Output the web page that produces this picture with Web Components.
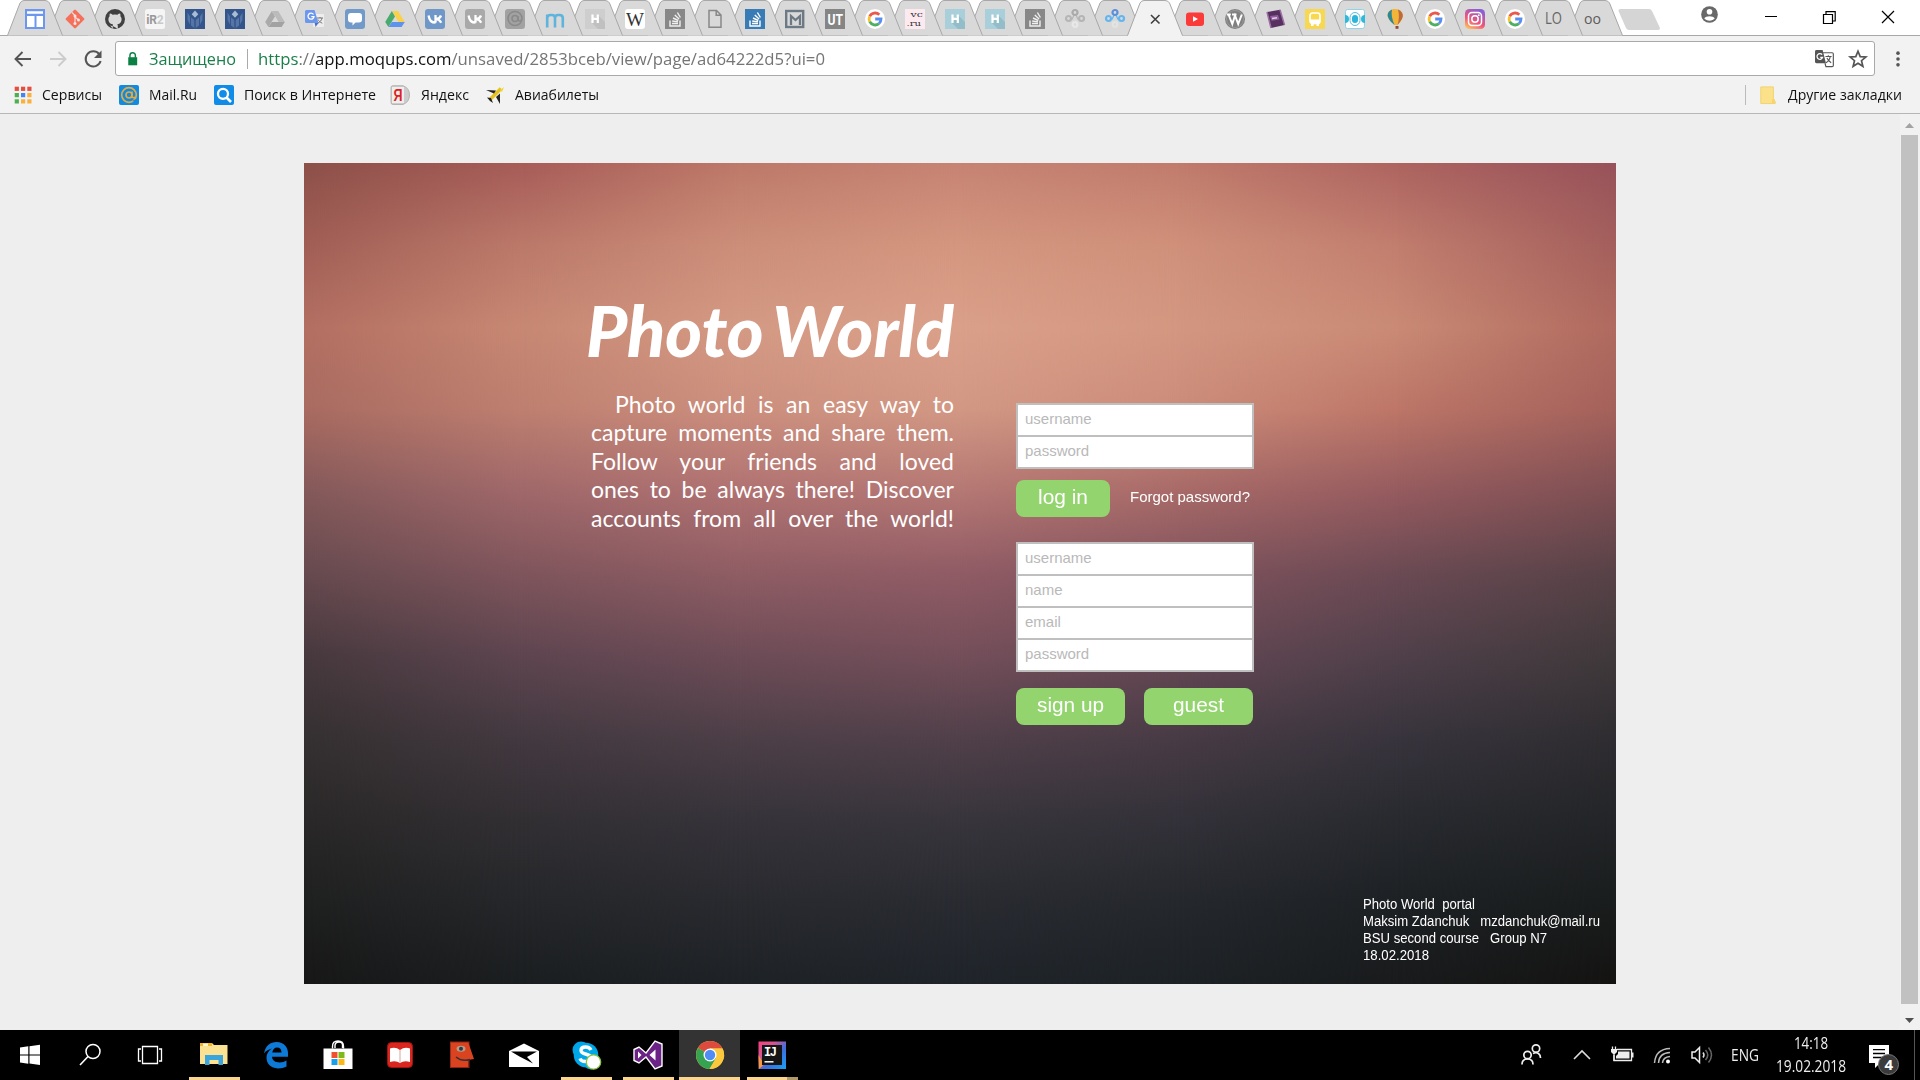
<!DOCTYPE html>
<html lang="ru">
<head>
<meta charset="utf-8">
<title>Photo World</title>
<style>
html,body{margin:0;padding:0;height:100%;overflow:hidden;background:#eee}
body{font-family:"Open Sans","Noto Sans",sans-serif}
</style>
</head>
<body>
<desktop-screen></desktop-screen>
<script>
const so = (bg, fg) => `<rect width="20" height="20" fill="${bg}"/><path d="M5 11.500v5.500h10v-5.500M7 14.500h6M7.200 12l5.800.9M8 9l5.300 2.500M9.800 6l4.300 4M12.400 3.500l3 5" fill="none" stroke="${fg}" stroke-width="1.400"/>`;
const drive = (a, b, c) => `<path d="M7 2h6.200l6.600 11h-6.200z" fill="${b}"/><path d="M6.800 2 10 7.400 3.400 18 .2 13z" fill="${a}"/><path d="M6.800 13h13l-3.200 5H3.500z" fill="${c}"/>`;
const google = `<circle cx="10" cy="10" r="10" fill="#fff"/><g fill="none" stroke-width="2.800"><path d="M14.300 5.800A6 6 0 0 0 4.700 7.300" stroke="#ea5a4c"/><path d="M4.700 7.300a6 6 0 0 0 0 5.400" stroke="#fbc02d"/><path d="M4.700 12.700a6 6 0 0 0 9.300 1.800" stroke="#4caf62"/><path d="M14 14.500A6 6 0 0 0 16 10H10.200" stroke="#5a8df0"/></g>`;
const vk = bg => `<rect width="20" height="20" rx="3" fill="${bg}"/><path d="M3.600 6.500c.6 4.500 3.200 7.200 6.900 7.200M10.500 6v7.700M16 6.500c-.7 2-2.300 3.400-4.800 3.600 2.300.2 3.900 1.500 5 3.600" fill="none" stroke="#fff" stroke-width="2.300"/>`;
const hh = (bg, sh) => `<rect width="20" height="20" fill="${bg}"/><path d="M13 6l7 7v7h-7l-6-6z" fill="${sh}"/><path d="M7.500 5.500v8.500M12.800 5.500v8.500M7.500 9.800h5.300" stroke="#fff" stroke-width="2.200" fill="none"/>`;
const nodes = (a, b, c) => `<g fill="none" stroke-width="2.200"><path d="M7 10.500 9 6M11 6l2 4.500" stroke="${b}" stroke-width="1.200"/><circle cx="10" cy="3.500" r="2.500" stroke="${a}"/><circle cx="3.500" cy="9.500" r="2.500" stroke="${b}"/><circle cx="16.500" cy="9.500" r="2.500" stroke="${b}"/><circle cx="10" cy="15.500" r="2.300" stroke="${c}"/></g>`;
const shield = `<rect width="20" height="20" fill="#34558b"/><path d="M2.500 3.500 5 7.500v8L2.500 11zM17.500 3.500 15 7.500v8l2.500-4.500zM6 8.500l4 3 4-3v8l-4 3-4-3z" fill="#5475a5"/><path d="M10 1.500l3.300 3.700L10 8.800 6.700 5.200z" fill="#a9bcd6"/><path d="M10 11v8" stroke="#27477c"/>`;
const ICONS = {
 layout:`<rect width="20" height="20" fill="#6d97ee"/><path d="M2 2.200h16v2.600H2zM2 7h7.500v11H2zM11.500 7H18v11h-6.500z" fill="#fff"/>`,
 git:`<rect x="3" y="3" width="14" height="14" rx="1.200" transform="rotate(45 10 10)" fill="#f5705a"/><path d="M7 3.500l3 3v8M10 8l3.500 3" stroke="#f6d9d3" stroke-width="1.200" fill="none"/><circle cx="10" cy="7" r="1.500" fill="#f6e5e1"/><circle cx="10" cy="14.500" r="1.500" fill="#f6e5e1"/><circle cx="13.500" cy="11" r="1.500" fill="#f6e5e1"/>`,
 github:`<circle cx="10" cy="10" r="10" fill="#404040"/><path d="M7.700 19.700v-3c-2.400.5-3-1-3.500-1.700M7.700 17v-1.800c-3.200-.4-4.300-2.300-4.300-5 0-1.200.5-2.200 1.200-3-.2-.9-.1-1.900.3-2.700.9 0 1.800.5 2.700 1.200a9.500 9.500 0 0 1 4.800 0c.9-.7 1.800-1.200 2.700-1.200.4.8.5 1.800.3 2.700.7.800 1.200 1.800 1.200 3 0 2.700-1.100 4.600-4.300 5 .4.500.5 1.200.5 1.900v2.600z" fill="#dadada"/><path d="M7.800 16.200c-2 .4-2.700-.6-3.600-1.800" stroke="#404040" fill="none"/>`,
 ir2:`<rect width="20" height="20" rx="2.500" fill="#f5f5f5"/><text x="1.200" y="14.500" font-size="12" font-weight="700" font-family="Roboto" fill="#999" textLength="17.500">iR<tspan fill="#c8c8c8">2</tspan></text>`,
 shield, driveg:drive('#aaa','#bbb','#a2a2a2'), drive:drive('#48aa6b','#fad14b','#5e93ed'),
 translate:`<rect x="8" y="5" width="11" height="13" rx="1" fill="#eee"/><path d="M1.500 1h8l4 13H1.500A1.500 1.500 0 0 1 0 12.500v-10A1.500 1.500 0 0 1 1.500 1z" fill="#6c97ed"/><path d="M9.700 14h3.800l-3 4z" fill="#4a6fc6"/><path d="M8.500 5.500A3 3 0 1 0 9 7.600H6.300" stroke="#fff" stroke-width="1.300" fill="none"/><path d="M12 9h6M15 8v1M17 9c-.4 2.500-2 4-4 5M13 10.500c.8 1.500 2 2.800 4.300 3.700" stroke="#777" fill="none"/>`,
 chat:`<rect width="20" height="20" rx="3" fill="#729ac9"/><path d="M6 4h8q3 0 3 3v3.500q0 3-3 3h-3.500l-3 3v-3H6q-3 0-3-3V7q0-3 3-3z" fill="#fff"/>`,
 vk:vk('#6f98c9'), vkg:vk('#a9a9a9'),
 atg:`<rect width="20" height="20" rx="3" fill="#a2a2a2"/><circle cx="10" cy="9.500" r="7" fill="none" stroke="#8a8a8a" stroke-width="1.600"/><circle cx="10" cy="9.500" r="3" fill="none" stroke="#8a8a8a" stroke-width="1.600"/><path d="M13 7v4q1 2 3 0" stroke="#8a8a8a" fill="none" stroke-width="1.500"/>`,
 m:`<path d="M2.200 18.500V5.500M2.200 9q0-3 3.300-3H7q3 0 3 3v9.500M10 9q0-3 3-3h1.500q3.300 0 3.300 3v9.500" fill="none" stroke="#5eb4dc" stroke-width="2.600"/>`,
 hg:hh('#cecece','#c0c0c0'), h:hh('#a9d0da','#93bdc8'),
 wiki:`<rect width="20" height="20" rx="3" fill="#fff"/><text x="1" y="16.500" font-size="18" font-family="Liberation Serif" fill="#333" textLength="18" lengthAdjust="spacingAndGlyphs">W</text>`,
 sog:so('#888','#f0f0f0'), so:so('#397cb5','#fff'),
 doc:`<path d="M4 1.500h7.500L16 6v12.300H4zM11.200 1.500v4.800H16" fill="none" stroke="#888" stroke-width="1.500"/>`,
 mm:`<rect x="1.200" y="2" width="17" height="16" fill="none" stroke="#6d7984" stroke-width="2.400"/><path d="M6 16V7l4.500 4L15 7v9" fill="none" stroke="#6d7984" stroke-width="2.300"/>`,
 ut:`<rect width="20" height="20" fill="#858585"/><text x="2.500" y="15.500" font-size="15" font-weight="700" font-family="Roboto" fill="#fff" textLength="15.500" lengthAdjust="spacingAndGlyphs">UT</text>`,
 google,
 vc:`<rect width="20" height="20" fill="#fdeaf0"/><g font-size="7.500" font-family="DejaVu Serif" fill="#333" transform="scale(1.450 1)"><text x="3.800" y="8" textLength="8.500" lengthAdjust="spacingAndGlyphs">vc</text><text x="1" y="17" textLength="10" lengthAdjust="spacingAndGlyphs">.ru</text></g>`,
 ng:nodes('#aaa','#b5b5b5','#e8e8e8'), nb:nodes('#5a8fdc','#62b5ef','#e2e4e0'),
 close:`<path d="M6 6l8.500 8.500M14.500 6 6 14.500" stroke="#404040" stroke-width="1.600"/>`,
 yt:`<rect x="1" y="3.500" width="18" height="13.500" rx="3" fill="#fb3a3a"/><path d="M8 7.200v5.600l5-2.800z" fill="#fff"/>`,
 wp:`<circle cx="10" cy="10" r="10" fill="#808080"/><circle cx="10" cy="10" r="8.500" fill="none" stroke="#999"/><path d="M1.800 5.500h4M7 5.500h4.500M3.500 5.500l3.800 9.500 2.700-8.500 3.200 8.500 3.600-9.500" stroke="#fff" stroke-width="2" fill="none"/>`,
 purple:`<path d="M2 3 15 .800 19.500 16 6 19z" fill="#573060"/><path d="M2 3l4 16M15 .8 19.500 16" stroke="#9b6fa4" stroke-width="1.500"/><path d="M5 7l8-1 1.500 4.500-8 1.300z" fill="#90609c"/><path d="M7 9.500l5-.7" stroke="#e3cfe6" stroke-width="1.500"/>`,
 bus:`<rect width="20" height="20" fill="#f9d851"/><rect x="5" y="4" width="10" height="10.500" rx="2.500" fill="none" stroke="#fff" stroke-width="1.700"/><path d="M5 10.500h10v3.500H5zM6 14h2.500v3H6zM11.500 14H14v3h-2.500z" fill="#fff"/>`,
 doll:`<rect x=".5" y=".5" width="19" height="19" rx="2" fill="#fff" stroke="#8fd3e6"/><path d="M0 6q4 0 4 4t-4 4zM20 6q-4 0-4 4t4 4z" fill="#2fb7dc"/><rect x="5" y="3.500" width="10" height="13" rx="5" fill="#fff" stroke="#57bfd9"/><rect x="7" y="6" width="6" height="8" rx="3" fill="#2db4da"/>`,
 balloon:`<path d="M10 0c5 0 8 3 8 6.500 0 4-4 8-5.500 9.500h-3C6 13 2.500 9.500 2.500 6 2.500 2.500 6 0 10 0z" fill="#f3b43a"/><path d="M7 .5C3.500 2 2 5 3 8c1 3 4 6 6.500 8C7 10 6 5 7 .5z" fill="#2c8796"/><path d="M13 .5c3.500 1.500 5 4 4.800 6.500-.5 3.500-4 7.500-5.300 9 1.500-5 2-10 .5-15.500z" fill="#bd6a3c"/><path d="M10.500 17h3v2.800h-3z" fill="#8a4a3a"/>`,
 insta:`<defs><linearGradient id="ig" x1=".2" y1="1" x2=".7" y2="0"><stop offset="0" stop-color="#fcc060"/><stop offset=".4" stop-color="#f0557a"/><stop offset="1" stop-color="#8560d8"/></linearGradient></defs><rect width="20" height="20" rx="4.500" fill="url(#ig)"/><g fill="none" stroke="#fff" stroke-width="1.500"><rect x="3.500" y="3.500" width="13" height="13" rx="3.500"/><circle cx="10" cy="10" r="3.200"/></g><circle cx="13.800" cy="6.200" r=".9" fill="#fff"/>`,
 lo:`<text x="0" y="15" font-size="15.500" font-family="Open Sans" font-weight="400" fill="#666" textLength="17" lengthAdjust="spacingAndGlyphs">LO</text>`,
 oo:`<text x="-1" y="15" font-size="15" font-family="Open Sans" fill="#5c5c5c" textLength="17" lengthAdjust="spacingAndGlyphs">oo</text>`,
 back:`<path d="M18 10H3M9.500 3 2.500 10l7 7" fill="none" stroke="#555" stroke-width="1.900"/>`,
 fwd:`<path d="M2 10h15M10.500 3l7 7-7 7" fill="none" stroke="#ccc" stroke-width="1.900"/>`,
 reload:`<path d="M16.200 5.200A7.600 7.600 0 1 0 17.600 12" fill="none" stroke="#555" stroke-width="2"/><path d="M18.500 1.500V9H11z" fill="#555"/>`,
 lock:`<path d="M5 8.500h10.500v9.500H5z" fill="#0b8043"/><path d="M7 9V6.500a3.200 3.200 0 0 1 6.400 0V9" fill="none" stroke="#0b8043" stroke-width="1.700"/>`,
 apps:['#e74c3c,#e74c3c,#e74c3c','#4caf50,#4285f4,#fbb03b','#4caf50,#fbb03b,#fbb03b'].map((r,j)=>r.split(',').map((c,i)=>`<rect x="${1.7+i*6.300}" y="${1.7+j*6.300}" width="4.200" height="4.200" fill="${c}"/>`).join('')).join(''),
 mailru:`<rect width="20" height="20" rx="2" fill="#118be0"/><circle cx="10" cy="10" r="7.300" fill="none" stroke="#e9a93b" stroke-width="1.700"/><circle cx="10" cy="10" r="3" fill="none" stroke="#e9a93b" stroke-width="1.700"/><path d="M13 6.500v4.700q.8 2.500 3.500.8" fill="none" stroke="#e9a93b" stroke-width="1.600"/><path d="M13 16l4 1v-3z" fill="#118be0"/>`,
 search:`<rect width="20" height="20" rx="2" fill="#118be8"/><circle cx="9" cy="8.800" r="5" fill="none" stroke="#fff" stroke-width="2.300"/><path d="M12.500 12.500 17 17" stroke="#fff" stroke-width="2.600"/>`,
 yandex:`<path d="M3 .7h10Q19.500 3 19.500 10T13 19.500H3q-2 0-2-2v-15Q1 .7 3 .7z" fill="#ccc" stroke="#aaa" stroke-width=".8"/><rect x="2" y="2" width="12" height="16" fill="#eee"/><text x="3.500" y="16" font-size="16" font-weight="700" font-family="Liberation Sans" fill="#e0201c" textLength="9" lengthAdjust="spacingAndGlyphs">Я</text>`,
 plane:`<path d="M5 14.500 16 3.500" stroke="#e5c21c" stroke-width="3.500"/><path d="M15 5 19 2l-2 5z" fill="#f2d53a"/><path d="M1 5l10 .5L9 8.500zM15 8.500V19l-4-7zM2 12.500l4 .5 2 5-3-2z" fill="#222"/>`,
 folder:`<path d="M2 1h14v13.500l2 3v2H2z" fill="#fbe28a" stroke="#f1d069"/><path d="M14.500 19.500v-4.700h3v4.700z" fill="#f7d566"/>`,
 gtr:`<path d="M1.500 1H8l3.500 14h-10Q0 15 0 13.500v-11Q0 1 1.500 1z" fill="#555"/><path d="M8.500 4H18q1.300 0 1.300 1.300v12q0 1.200-1.300 1.200h-6.500l-1-3.500" fill="none" stroke="#555" stroke-width="1.200"/><path d="M7.500 6A3 3 0 1 0 8 8.700H5.500" fill="none" stroke="#fff" stroke-width="1.300"/><path d="M11 8h6.500M14 6.500V8M16 8c-.4 3-2 5-4.500 6.500M12.500 9.500c1 2 2.500 3.500 4.500 5" fill="none" stroke="#555" stroke-width="1.100"/>`,
 star:`<path d="M10 2.200l2.200 5.400 5.700.4-4.400 3.700 1.400 5.600L10 14.200l-4.900 3.100 1.400-5.600L2.100 8l5.700-.4z" fill="none" stroke="#555" stroke-width="1.700"/>`,
 dots:`<g fill="#555"><circle cx="10" cy="3.500" r="2"/><circle cx="10" cy="10" r="2"/><circle cx="10" cy="16.500" r="2"/></g>`,
 user:`<circle cx="10" cy="10" r="9.800" fill="#686868"/><circle cx="10" cy="6.700" r="3.300" fill="#fff"/><path d="M3.800 14.500c2-3.300 10.400-3.300 12.400 0-2.500 3.700-9.900 3.700-12.400 0z" fill="#fff"/>`,
 min:`<path d="M4 9.500h12" stroke="#000" stroke-width="1"/>`,
 max:`<path d="M4.500 7.500h9v9h-9zM7 7V4.700h9.200V14H14" fill="none" stroke="#000" stroke-width="1.200"/>`,
 x:`<path d="M4 4l12 12M16 4l-12 12" stroke="#000" stroke-width="1.200"/>`,
 /* taskbar, drawn on a 32 unit box */
 win:`<path d="M6 8.500l8.300-1.200v8.100H6zM15.500 7.200 26 5.800v9.600H15.500zM6 16.600h8.300v8.100L6 23.600zM15.500 16.600H26V26l-10.500-1.400z" fill="#fff"/>`,
 find:`<circle cx="18" cy="12.500" r="7" fill="none" stroke="#fff" stroke-width="1.500"/><path d="M13 17.500 5 26" stroke="#fff" stroke-width="1.600"/>`,
 tview:`<path d="M8.500 7.500h15v17h-15zM7 10H4.500v12H7M25 10h2.500v12H25" fill="none" stroke="#fff" stroke-width="1.300"/>`,
 explorer:`<path d="M2 4h12l2 2h13.500v19H2z" fill="#fbe293"/><path d="M2 4h12v3H2z" fill="#f0b52e"/><path d="M5 4.500h5V7H5z" fill="#fff4c4"/><path d="M7 26V16h18v10h-4.500v-5h-9v5z" fill="#3aa5dd"/>`,
 edge:`<path d="M4 14.500C5.500 6.500 10.500 3 16.500 3 24 3 28 8.500 28 14v3.800H12c.3 4 3.500 5.700 7.500 5.700 3 0 5-.8 7-2v6c-2.500 1.300-5 1.900-8.500 1.900C11 29.400 6.500 25 6.500 18.600c0-4 2-7 5.500-9.200C9 10 6 11.500 4 14.500zM12.300 13.500h9.200c0-3.300-1.600-5-4.400-5s-4.300 2-4.800 5z" fill="#0e7ad8"/>`,
 store:`<path d="M10.500 9.500V7.500q0-5.500 5.500-5.500t5.500 5.500v2M13 9V6q.5-3 4-3t3.500 3v3" fill="none" stroke="#fff" stroke-width="1.400"/><path d="M1.500 9.500h29V30h-29z" fill="#fff"/><path d="M9.500 13h6v6h-6z" fill="#f0502d"/><path d="M16.500 13h6v6h-6z" fill="#7fba1c"/><path d="M9.500 20h6v6h-6z" fill="#18a0ea"/><path d="M16.500 20h6v6h-6z" fill="#fbb713"/>`,
 book:`<rect x="3.500" y="3.500" width="25" height="25" rx="4" fill="#d9261f" stroke="#9c1512"/><path d="M6 9.500q5.500-2 10 1.500 4.500-3.500 10-1.500V23q-6-1.800-10 1-4-2.800-10-1z" fill="#fff"/><path d="M16 11v12.500" stroke="#d5a5a0"/>`,
 face:`<path d="M4 2.500h19.500V29H4z" fill="#8c2517"/><path d="M4.800 3.500h17.500L28 20l-6 1v7H4.800z" fill="#d9431f"/><ellipse cx="15" cy="9.800" rx="4.500" ry="3" fill="#ba9b80"/><circle cx="15" cy="9.800" r="2" fill="#243f55"/><path d="M10 18q6 5 14 2.500" fill="none" stroke="#333" stroke-width="1.500"/>`,
 mail:`<path d="M1 12 16 4.500 31 12v16H1z" fill="#fff"/><path d="M3 12.500h26L19 18l6 6.500-13.500-7z" fill="#000"/>`,
 skype:`<circle cx="11" cy="11" r="8.500" fill="#00a5e8"/><circle cx="21" cy="22" r="8.500" fill="#00a5e8"/><circle cx="16" cy="16" r="12.300" fill="#00a8ea"/><path d="M21 11q-1.500-3-5.500-3-4.500 0-4.500 3.500c0 4.500 10 3 10 7 0 3-2 4-5.500 4q-4.500 0-5.500-3" fill="none" stroke="#fff" stroke-width="3.400"/><circle cx="23.500" cy="23" r="7.200" fill="#fff" stroke="#8cc63f" stroke-width="1.300"/>`,
 vs:`<path d="M2 10.500 7 8l7 6L23 2l7 3v22l-7 3-9-12-7 6-5-2.500z" fill="#6b2485" stroke="#fff" stroke-width="1.400"/><path d="M6 12.500v7l3.500-3.500zM23.500 10.500v11L17.500 16z" fill="#fff"/>`,
 chrome:`<circle cx="16" cy="16" r="14" fill="#fbc93d"/><path d="M16 16 3.900 9A14 14 0 0 1 28.500 9.500H16z" fill="#dd4b3e"/><path d="M16 16 3.900 9A14 14 0 0 0 15.500 30L22 19.500z" fill="#35a352"/><path d="M16 9.500h12.500A14 14 0 0 1 15.500 30L22 19z" fill="#fbc93d"/><circle cx="16" cy="16" r="6.500" fill="#fff"/><circle cx="16" cy="16" r="5.200" fill="#4f8df5"/>`,
 ij:`<defs><linearGradient id="ijg" x1="0" y1="0" x2="1" y2="1"><stop offset="0" stop-color="#f4407f"/><stop offset=".3" stop-color="#d9558f"/><stop offset=".6" stop-color="#3b6fe0"/><stop offset="1" stop-color="#1ba0f5"/></linearGradient></defs><rect x="2.500" y="2.500" width="27.500" height="27.500" fill="url(#ijg)"/><path d="M2.500 16 8 25.500 3 30z" fill="#f59a3c"/><rect x="6" y="6" width="20" height="20" fill="#151515"/><text x="8" y="17" font-size="12" font-weight="700" font-family="Liberation Mono" fill="#fff" textLength="13">IJ</text><path d="M8.500 22.800h9" stroke="#fff" stroke-width="1.500"/>`,
 people:`<g fill="none" stroke="#eee" stroke-width="1.700"><circle cx="20" cy="9.500" r="3.700"/><circle cx="11.500" cy="16" r="3.700"/><path d="M6 25.500q0-5.500 5.500-5.500t5.500 5.500M17 14.500q3-1.500 5.500 0 2 1.500 2 4.500"/></g>`,
 caret:`<path d="M8 20l8-8 8 8" fill="none" stroke="#ddd" stroke-width="1.600"/>`,
 battery:`<path d="M12 10.500h14.500v11H9V16" fill="none" stroke="#eee" stroke-width="1.300"/><path d="M13 12.500h11.500v7H11V17l2-2zM27 13.500h1.500v5H27zM6 10h6v3L10 15H8l-2-2z" fill="#eee"/><path d="M7.500 10V7.500M10.500 10V7.500M9 15v7" stroke="#eee" stroke-width="1.300"/>`,
 wifi:`<g fill="none" stroke-width="1.500" stroke="#bbb"><path d="M8.500 24Q9.500 10 24 9.500"/><path d="M12.500 24Q13 14 24 13.500"/><path d="M16.500 24Q17 18 24 17.500"/></g><circle cx="22" cy="22.500" r="2" fill="#fff"/>`,
 sound:`<path d="M7 13h3l4.500-4.500v15L10 19H7z" fill="none" stroke="#eee" stroke-width="1.500"/><path d="M18 13.500q2 2.500 0 5" stroke="#ddd" fill="none" stroke-width="1.500"/><path d="M20.500 11q4.500 5 0 10M23.500 8.500q6 7.500 0 15" stroke="#666" fill="none" stroke-width="1.500"/>`,
 note:`<path d="M1 6h20v18h-9l-5 5v-5H1z" fill="#fff"/><path d="M5 10.700h12M5 14.500h12M5 18.500h12" stroke="#000" stroke-width="1.300"/><circle cx="20.500" cy="25.500" r="10" fill="#3b3b3b" stroke="#777"/><text x="16.500" y="31" font-size="15" font-weight="700" font-family="Open Sans" fill="#fff">4</text>`
};
const make = (tag, html, init) => customElements.define(tag, class extends HTMLElement {
  connectedCallback() {
    if (this.shadowRoot) return;
    this.attachShadow({mode: 'open'}).innerHTML = typeof html === 'function' ? html(this) : html;
    if (init) init(this, this.shadowRoot);
  }
});

/* line of text drawn at an exact width: <fit-text w="120"> */
make('fit-text', el => `<style>:host{display:block;flex:none;white-space:pre;width:${el.getAttribute('w')}px}span{display:inline-block;transform-origin:0 50%}</style><span><slot></slot></span>`,
  (el, root) => {
    const s = root.querySelector('span');
    s.style.transform = `scaleX(${+el.getAttribute('w') / s.getBoundingClientRect().width})`;
  });

make('ui-icon', el => {
  const s = el.getAttribute('s') || 20, b = el.getAttribute('b') || 20;
  return `<style>:host{display:block;flex:none;width:${s}px;height:${s}px}svg{display:block;overflow:visible}</style><svg width="${s}" height="${s}" viewBox="0 0 ${b} ${b}">${ICONS[el.getAttribute('n')]}</svg>`;
});

make('browser-tab', el => {
  const on = el.hasAttribute('active');
  return `<style>:host{display:grid;flex:none;width:40px;height:36px;z-index:${el.getAttribute('z')}}
  svg,ui-icon{grid-area:1/1}svg{margin-left:-8px;overflow:visible}ui-icon{margin:9px 0 0 10px}</style>
  <svg width="56" height="36" viewBox="0 0 56 36"><path d="M.5 ${on ? 36.500 : 35.500} L13 3 Q14.500.5 17 .5 H38 Q41 .5 42.500 3 L55.500 ${on ? 36.500 : 35.500}z" fill="${on ? '#f2f2f2' : '#d9d9d9'}"/><path d="M.5 35.500 L13 3 Q14.500.5 17 .5 H38 Q41 .5 42.500 3 L55.500 35.500" fill="none" stroke="#a8a8a8"/></svg><ui-icon n="${el.getAttribute('n')}"></ui-icon>`;
});

const TABS = 'layout git github ir2 shield shield driveg translate chat drive vk vkg atg m hg wiki sog doc so mm ut google vc h h sog ng nb close yt wp purple bus doll balloon google insta google lo oo'.split(' ');
make('tab-strip', `<style>:host{display:flex;height:36px;padding-left:15px;background:linear-gradient(#fff 35px,#a8a8a8 35px);isolation:isolate}
 .new{width:42px;height:21px;margin:9px 0 0 3px;flex:none}.ctl{display:flex;margin-left:auto;padding-right:22px}
 .ctl ui-icon+ui-icon{margin:7px 0 0 0}.u{margin:6px 43px 0 0}.g{margin-right:38px!important}.h{margin-right:39px!important}</style>
 ${TABS.map((n, i) => `<browser-tab n="${n}" z="${n === 'close' ? 99 : 60 - i}" ${n === 'close' ? 'active' : ''}></browser-tab>`).join('')}
 <svg class="new" viewBox="0 0 42 21"><path d="M2 0h29q2 0 3 2l8 17q0 2-2 2H11q-2 0-3-2L.5 2Q.5 0 2 0z" fill="#d5d5d5"/></svg>
 <div class="ctl"><ui-icon class="u" n="user" s="17"></ui-icon><ui-icon class="g" n="min"></ui-icon><ui-icon class="h" n="max"></ui-icon><ui-icon n="x"></ui-icon></div>`);

make('address-bar', `<style>:host{display:flex;align-items:center;height:41px;padding:4px 13px 0 13px;box-sizing:border-box;background:#f2f2f2}
 .nav{display:flex;gap:15px;width:102px;flex:none}.box{flex:1;height:33px;border:1px solid #a9a9a9;border-radius:3px;background:#fff;display:flex;align-items:center;font-size:17px;line-height:33px;padding:0 6px 0 8px}
 .sep{width:1px;height:20px;background:#aaa;margin:0 10px 0 11px}.a{color:#1b7f49}.u{color:#757575}b{font-weight:400;color:#111}.r{display:flex;gap:14px;margin-left:auto}
 .d{margin-left:14px}</style>
 <div class="nav"><ui-icon n="back"></ui-icon><ui-icon n="fwd"></ui-icon><ui-icon n="reload"></ui-icon></div>
 <div class="box"><ui-icon n="lock" s="17" style="margin-right:8px"></ui-icon><fit-text class="a" w="87">Защищено</fit-text><div class="sep"></div><fit-text class="u" w="567"><span class="a">https</span>://<b>app.moqups.com</b>/unsaved/2853bceb/view/page/ad64222d5?ui=0</fit-text><div class="r"><ui-icon n="gtr" s="19"></ui-icon><ui-icon n="star"></ui-icon></div></div>
 <ui-icon class="d" n="dots" s="18"></ui-icon>`);

make('book-mark', el => `<style>:host{display:flex;align-items:center;flex:none;margin-right:${el.getAttribute('m') || 0}px;color:#111}fit-text{margin-left:${el.getAttribute('g')}px}</style><ui-icon n="${el.getAttribute('n')}" s="${el.getAttribute('s') || 20}"></ui-icon><fit-text w="${el.getAttribute('w')}">${el.textContent}</fit-text>`);

make('bookmark-bar', `<style>:host{display:flex;align-items:center;height:37px;padding:0 18px 0 13px;box-sizing:border-box;background:#f2f2f2;border-bottom:1px solid #b6b6b6;font-size:14.500px;line-height:20px}
 .sep{width:1px;height:20px;background:#bbb;margin:0 13px 0 auto}</style>
 <book-mark n="apps" g="9" w="60" m="17">Сервисы</book-mark><book-mark n="mailru" g="10" w="48" m="17">Mail.Ru</book-mark>
 <book-mark n="search" g="10" w="132" m="14">Поиск в Интернете</book-mark><book-mark n="yandex" g="11" w="48" m="16">Яндекс</book-mark>
 <book-mark n="plane" g="10" w="84">Авиабилеты</book-mark><div class="sep"></div><book-mark n="folder" g="11" s="18" w="114">Другие закладки</book-mark>`);

/* backdrop: vertical gradients cross-faded from left to right */
const COLS = [
 ['8c5049','a15e55','b36f62','a96b61','84595a','664a4f','47393e','353031','2a2828','1f2020','171717'],
 ['a75c58','bb796a','c78873','be7f70','a0686a','7f555c','5e4550','433940','322f33','25272a','1b1e20'],
 ['bd7969','cc8e79','d49a84','cc8f7e','b07272','8f5d64','6d4c57','4d3f47','36333a','292a2f','1e2226'],
 ['c68373','d4967f','dba08a','d29884','b57874','905b65','744f5a','51404a','38353c','292b31','1f242a'],
 ['c07b6c','cf907a','d39781','cc8c7a','a86a68','80535d','654854','483b45','333139','25282d','1d2226'],
 ['ad6460','c17d6e','c98a75','bd7668','955b5f','6b4a54','50404a','38343d','282a2f','1d2124','191b1c'],
 ['97525a','a35f5c','b06a5f','a4615b','7e4f53','574247','40393b','2f2d31','232528','1a1d1d','141312']];
make('blur-backdrop', `<style>:host{display:grid;width:1312px;height:821px}i,slot{grid-area:1/1}slot{display:flex;z-index:1}</style>
 ${COLS.map((c, i) => { const m = i ? `linear-gradient(90deg,transparent ${(i - 1) / 6 * 100}%,#000 ${i / 6 * 100}%)` : 'none';
   return `<i style="background:linear-gradient(${c.map(x => '#' + x)});-webkit-mask-image:${m};mask-image:${m}"></i>`; }).join('')}<slot></slot>`);

make('field-stack', el => `<style>:host{display:flex;flex-direction:column;gap:2px;width:234px;padding:2px;background:#c0bfbf}div{height:30px;background:#fff;color:#b9b9b9;font:15px/27px "Liberation Sans",sans-serif;padding-left:7px}</style>${el.getAttribute('fields').split(',').map(f => `<div>${f}</div>`).join('')}`);
make('green-button', `<style>:host{display:flex;justify-content:center;height:37px;border-radius:8px;background:#93d46f;color:#fff;font:20px/35px "Liberation Sans",sans-serif}</style><slot></slot>`);

make('photo-page', `<style>:host{display:flex;height:916px;background:#eee}
 .area{flex:1;display:flex;padding:49px 0 0 304px}
 .intro{padding:131px 0 0 284px;width:367px;flex:none;color:#fff}
 h1{margin:0 0 0 -2px;font:italic 900 70px/72px Lato,sans-serif;height:96px;word-spacing:-6px}
 .p{font:23px/28.400px Lato,sans-serif;margin-left:3px;width:363px}.p div{text-align-last:justify;white-space:nowrap}.p div:first-child{padding-left:24px}
 .forms{padding:240px 0 0 61px;width:239px;flex:none}.row{display:flex;justify-content:space-between;width:237px}
 .forgot{font:15px/37px "Liberation Sans",sans-serif;color:#fff;margin:-2px 3px 0 0}
 .foot{align-self:flex-end;margin:0 0 20px 108px;color:#fff;font:14px/17px "Liberation Sans",sans-serif}
 .bar{width:20px;background:#f1f1f1;display:flex;flex-direction:column;align-items:flex-start}.bar i{flex:1;width:17px;margin-left:1px;background:#c1c1c1}.bar svg{display:block;width:20px}</style>
 <div class="area"><blur-backdrop>
  <div class="intro"><h1><fit-text w="368">Photo World</fit-text></h1>
   <div class="p"><div>Photo world is an easy way to</div><div>capture moments and share them.</div><div>Follow your friends and loved</div><div>ones to be always there! Discover</div><div>accounts from all over the world!</div></div></div>
  <div class="forms"><field-stack fields="username,password"></field-stack>
   <div class="row" style="margin:11px 0 25px"><green-button style="width:94px"><fit-text w="50">log in</fit-text></green-button><fit-text class="forgot" w="120">Forgot password?</fit-text></div>
   <field-stack fields="username,name,email,password"></field-stack>
   <div class="row" style="margin-top:16px"><green-button style="width:109px"><fit-text w="67">sign up</fit-text></green-button><green-button style="width:109px"><fit-text w="51">guest</fit-text></green-button></div></div>
  <div class="foot"><fit-text w="112">Photo World  portal</fit-text><fit-text w="237">Maksim Zdanchuk   mzdanchuk@mail.ru</fit-text><fit-text w="184">BSU second course   Group N7</fit-text><fit-text w="66">18.02.2018</fit-text></div>
 </blur-backdrop></div>
 <div class="bar"><svg height="21"><path d="M5 14h9L9.500 9z" fill="#a3a3a3"/></svg><i></i><svg height="26"><path d="M5 14h9l-4.500 5z" fill="#505050"/></svg></div>`);

make('task-item', el => `<style>:host{display:flex;flex-direction:column;align-items:center;justify-content:space-between;flex:none;width:${el.getAttribute('w') || 62}px;height:50px}
 :host([on]){background:#333;width:61px;margin-right:1px}ui-icon{margin-top:9px}i{height:3px;width:${el.hasAttribute('on') ? 61 : 51}px;background:${el.hasAttribute('multi') ? 'linear-gradient(90deg,#fcd58c 40px,#b09a68 40px)' : '#fcd58c'}}</style><ui-icon n="${el.getAttribute('n')}" s="32" b="32" ></ui-icon>${el.hasAttribute('run') ? '<i></i>' : ''}`);

make('task-bar', `<style>:host{display:flex;height:50px;background:#000;color:#eee;font-size:16px}
 .tray{margin-left:auto;display:flex;align-items:center}.time{display:flex;flex-direction:column;align-items:center;line-height:23px;width:70px;margin:0 22px 0 17px}
 .show{width:1px;height:50px;background:#555;margin:0 5px 0 14px}</style>
 <task-item n="win" w="60"></task-item><task-item n="find"></task-item><task-item n="tview" w="56" style="margin-right:5px"></task-item>
 <task-item n="explorer" run></task-item><task-item n="edge"></task-item><task-item n="store"></task-item><task-item n="book"></task-item><task-item n="face"></task-item><task-item n="mail"></task-item><task-item n="skype" run></task-item><task-item n="vs" run></task-item><task-item n="chrome" run on></task-item><task-item n="ij" run multi></task-item>
 <div class="tray"><ui-icon n="people" s="32" b="32" style="margin-right:18px"></ui-icon><ui-icon n="caret" s="32" b="32" style="margin-right:7px"></ui-icon><ui-icon n="battery" s="32" b="32" style="margin-right:9px"></ui-icon><ui-icon n="wifi" s="32" b="32" style="margin-right:7px"></ui-icon><ui-icon n="sound" s="32" b="32" style="margin-right:14px"></ui-icon>
 <fit-text w="28">ENG</fit-text><div class="time"><fit-text w="34">14:18</fit-text><fit-text w="70">19.02.2018</fit-text></div><ui-icon n="note" s="32" b="32"></ui-icon><div class="show"></div></div>`);

make('desktop-screen', `<style>:host{display:flex;flex-direction:column;width:1920px;height:1080px;overflow:hidden}</style>
 <tab-strip></tab-strip><address-bar></address-bar><bookmark-bar></bookmark-bar><photo-page></photo-page><task-bar></task-bar>`);
</script>
</body>
</html>
